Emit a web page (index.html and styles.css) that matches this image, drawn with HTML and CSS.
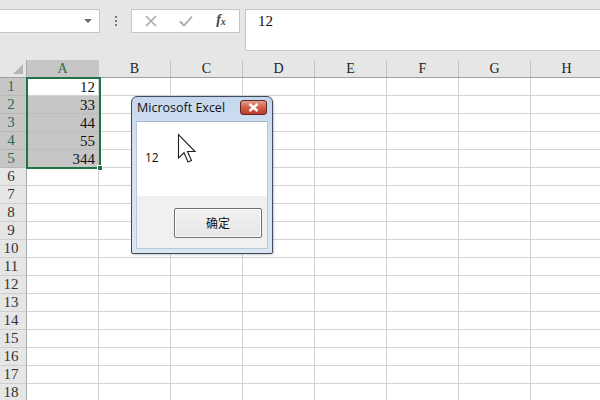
FILE: index.html
```html
<!DOCTYPE html>
<html>
<head>
<meta charset="utf-8">
<link rel="stylesheet" href="styles.css">
</head>
<body>
<div class="fbar">
  <div class="namebox"><span class="dd"></span></div>
  <div class="dots"><i></i><i></i><i></i></div>
  <div class="fxbox">
    <span class="ic ic-x"><svg width="12" height="12" viewBox="0 0 12 12"><path d="M1 1L11 11M11 1L1 11" stroke="#a8a8a8" stroke-width="1.6" fill="none"/></svg></span>
    <span class="ic ic-ok"><svg width="14" height="12" viewBox="0 0 14 12"><path d="M1 6.5L5 10.5L13 1.5" stroke="#a8a8a8" stroke-width="1.8" fill="none"/></svg></span>
    <span class="ic ic-fx"><span class="fx">f<sub>x</sub></span></span>
  </div>
  <div class="input">12</div>
</div>
<div class="sheet">
  <div class="row hdr">
    <div class="rh corner"><span class="tri"></span></div>
    <div class="hc sel">A</div><div class="hc">B</div><div class="hc">C</div><div class="hc">D</div><div class="hc">E</div><div class="hc">F</div><div class="hc">G</div><div class="hc">H</div>
  </div>
  <div class="row"><div class="rh sel">1</div><div class="c">12</div><div class="c"></div><div class="c"></div><div class="c"></div><div class="c"></div><div class="c"></div><div class="c"></div><div class="c"></div></div>
  <div class="row"><div class="rh sel">2</div><div class="c g">33</div><div class="c"></div><div class="c"></div><div class="c"></div><div class="c"></div><div class="c"></div><div class="c"></div><div class="c"></div></div>
  <div class="row"><div class="rh sel">3</div><div class="c g">44</div><div class="c"></div><div class="c"></div><div class="c"></div><div class="c"></div><div class="c"></div><div class="c"></div><div class="c"></div></div>
  <div class="row"><div class="rh sel">4</div><div class="c g">55</div><div class="c"></div><div class="c"></div><div class="c"></div><div class="c"></div><div class="c"></div><div class="c"></div><div class="c"></div></div>
  <div class="row"><div class="rh sel">5</div><div class="c g">344</div><div class="c"></div><div class="c"></div><div class="c"></div><div class="c"></div><div class="c"></div><div class="c"></div><div class="c"></div></div>
  <div class="row"><div class="rh">6</div><div class="c"></div><div class="c"></div><div class="c"></div><div class="c"></div><div class="c"></div><div class="c"></div><div class="c"></div><div class="c"></div></div>
  <div class="row"><div class="rh">7</div><div class="c"></div><div class="c"></div><div class="c"></div><div class="c"></div><div class="c"></div><div class="c"></div><div class="c"></div><div class="c"></div></div>
  <div class="row"><div class="rh">8</div><div class="c"></div><div class="c"></div><div class="c"></div><div class="c"></div><div class="c"></div><div class="c"></div><div class="c"></div><div class="c"></div></div>
  <div class="row"><div class="rh">9</div><div class="c"></div><div class="c"></div><div class="c"></div><div class="c"></div><div class="c"></div><div class="c"></div><div class="c"></div><div class="c"></div></div>
  <div class="row"><div class="rh">10</div><div class="c"></div><div class="c"></div><div class="c"></div><div class="c"></div><div class="c"></div><div class="c"></div><div class="c"></div><div class="c"></div></div>
  <div class="row"><div class="rh">11</div><div class="c"></div><div class="c"></div><div class="c"></div><div class="c"></div><div class="c"></div><div class="c"></div><div class="c"></div><div class="c"></div></div>
  <div class="row"><div class="rh">12</div><div class="c"></div><div class="c"></div><div class="c"></div><div class="c"></div><div class="c"></div><div class="c"></div><div class="c"></div><div class="c"></div></div>
  <div class="row"><div class="rh">13</div><div class="c"></div><div class="c"></div><div class="c"></div><div class="c"></div><div class="c"></div><div class="c"></div><div class="c"></div><div class="c"></div></div>
  <div class="row"><div class="rh">14</div><div class="c"></div><div class="c"></div><div class="c"></div><div class="c"></div><div class="c"></div><div class="c"></div><div class="c"></div><div class="c"></div></div>
  <div class="row"><div class="rh">15</div><div class="c"></div><div class="c"></div><div class="c"></div><div class="c"></div><div class="c"></div><div class="c"></div><div class="c"></div><div class="c"></div></div>
  <div class="row"><div class="rh">16</div><div class="c"></div><div class="c"></div><div class="c"></div><div class="c"></div><div class="c"></div><div class="c"></div><div class="c"></div><div class="c"></div></div>
  <div class="row"><div class="rh">17</div><div class="c"></div><div class="c"></div><div class="c"></div><div class="c"></div><div class="c"></div><div class="c"></div><div class="c"></div><div class="c"></div></div>
  <div class="row"><div class="rh">18</div><div class="c"></div><div class="c"></div><div class="c"></div><div class="c"></div><div class="c"></div><div class="c"></div><div class="c"></div><div class="c"></div></div>
  <div class="selbox"><span class="handle"></span></div>
</div>

<div class="dialog">
  <div class="title">
    <span class="ttext">Microsoft Excel</span>
    <span class="close"><svg width="11" height="9" viewBox="0 0 11 9"><path d="M1.5 1L9.5 8M9.5 1L1.5 8" stroke="#fff" stroke-width="2.4" fill="none"/></svg></span>
  </div>
  <div class="client">
    <div class="msg">12</div>
    <div class="foot"><div class="btn">确定</div></div>
  </div>
</div>

<svg class="cursor" width="24" height="32" viewBox="0 0 24 32">
  <path d="M1.5 1.5L1.5 25L7 19.8L11 29L14.5 27.5L10.5 18.5L18 18.5Z" fill="#fff" stroke="#222" stroke-width="1.1" stroke-linejoin="miter"/>
</svg>
</body>
</html>
```

FILE: styles.css
```css
* { box-sizing: border-box; }
html, body { margin: 0; padding: 0; }
body {
  width: 600px;
  height: 400px;
  overflow: hidden;
  background: #fff;
  font-family: "Liberation Serif", serif;
  position: relative;
}

.fbar {
  height: 60px;
  background: #e6e6e6;
  display: flex;
  align-items: flex-start;
  padding-top: 9px;
  width: 600px;
}
.namebox {
  width: 100px;
  flex: none;
  height: 24px;
  background: #fff;
  border: 1px solid #c6c6c6;
  border-left: 0;
  display: flex;
  justify-content: flex-end;
  align-items: center;
  padding-right: 7px;
}
.dd {
  width: 0; height: 0;
  border-left: 4px solid transparent;
  border-right: 4px solid transparent;
  border-top: 4px solid #6a6a6a;
}
.dots {
  width: 31px;
  flex: none;
  height: 24px;
  display: flex;
  flex-direction: column;
  align-items: center;
  justify-content: center;
  gap: 2px;
}
.dots i {
  display: block;
  width: 2px; height: 2px;
  background: #777;
}
.fxbox {
  width: 109px;
  flex: none;
  height: 24px;
  background: #fff;
  border: 1px solid #c6c6c6;
  display: flex;
  align-items: center;
}
.ic { display: flex; justify-content: center; align-items: center; height: 22px; }
.ic-x { width: 37px; }
.ic-ok { width: 34px; }
.ic-fx { width: 36px; }
.fx {
  font-family: "Liberation Serif", serif;
  font-style: italic;
  font-weight: bold;
  font-size: 14px;
  color: #444;
  line-height: 14px;
}
.fx sub { font-size: 10px; vertical-align: -1px; }
.input {
  margin-left: 5px;
  flex: 1;
  height: 42px;
  background: #fff;
  border: 1px solid #c6c6c6;
  border-right: 0;
  padding-left: 12px;
  font-size: 15px;
  line-height: 23px;
  color: #111;
}

.sheet { position: relative; width: 603px; }
.row { display: flex; height: 18px; }
.rh {
  width: 27px;
  flex: none;
  background: #e6e6e6;
  border-right: 1px solid #a9a9a9;
  border-bottom: 1px solid #cfcfcf;
  font-size: 15px;
  line-height: 17px;
  color: #333;
  text-align: center;
  padding-right: 4px;
}
.rh.sel { background: #c6c6c6; color: #2e6e4e; border-bottom-color: #b8b8b8; }
.hdr { border-bottom: 1px solid #a0a0a0; height: 18px; }
.hdr .rh, .hdr .hc { height: 17px; border-bottom: 0; }
.corner {
  display: flex;
  justify-content: flex-end;
  align-items: flex-end;
  padding: 0 3px 3px 0;
}
.tri {
  width: 0; height: 0;
  border-left: 10px solid transparent;
  border-bottom: 10px solid #b5b5b5;
}
.hc {
  width: 72px;
  flex: none;
  background: #e6e6e6;
  border-right: 1px solid #c6c6c6;
  text-align: center;
  font-size: 14px;
  line-height: 18px;
  color: #222;
}
.hc.sel { background: #c6c6c6; color: #2e6e4e; }
.c {
  width: 72px;
  flex: none;
  border-right: 1px solid #d4d4d4;
  border-bottom: 1px solid #d4d4d4;
  font-size: 15px;
  line-height: 18px;
  text-align: right;
  padding-right: 3px;
  color: #111;
}
.c.g { background: #c6c6c6; border-color: #bdbdbd; }
.selbox {
  position: absolute;
  left: 26px;
  top: 17px;
  width: 75px;
  height: 92px;
  border: 2px solid #217346;
}
.handle {
  position: absolute;
  right: -4px;
  bottom: -4px;
  width: 6px;
  height: 6px;
  background: #217346;
  border: 1px solid #fff;
}

.dialog {
  position: absolute;
  left: 131px;
  top: 96px;
  width: 142px;
  height: 158px;
  border: 1px solid #3e4c5e;
  border-radius: 6px 6px 2px 2px;
  background: linear-gradient(#c6d7ed, #d4e1f1 30%, #dbe6f3);
  padding: 0 4px 4px 4px;
  display: flex;
  flex-direction: column;
  box-shadow: 1px 1px 2px rgba(0,0,0,0.2);
}
.title {
  height: 24px;
  flex: none;
  display: flex;
  justify-content: space-between;
  align-items: flex-start;
  padding-left: 1px;
}
.ttext {
  font-family: "Open Sans", "Noto Sans", sans-serif;
  font-size: 12.5px;
  line-height: 22px;
  color: #111;
}
.close {
  margin-top: 3px;
  margin-right: 1px;
  width: 27px;
  height: 15px;
  border: 1px solid #5e2a22;
  border-radius: 3px;
  background: linear-gradient(#e59a8c, #d0604c 50%, #c0392b);
  display: flex;
  justify-content: center;
  align-items: center;
}
.client {
  flex: 1;
  background: #fff;
  border: 1px solid #b9c8da;
  border-top-color: #a3b5cb;
  display: flex;
  flex-direction: column;
}
.msg {
  height: 74px;
  padding: 29px 0 0 8px;
  font-family: "Open Sans", "Noto Sans", sans-serif;
  font-size: 12px;
  line-height: 14px;
  color: #111;
}
.foot {
  flex: 1;
  background: #f0f0f0;
  display: flex;
  justify-content: flex-end;
  align-items: flex-start;
  padding: 12px 5px 0 0;
}
.btn {
  width: 88px;
  height: 30px;
  border: 1px solid #707070;
  box-shadow: inset 0 0 0 1px #fcfcfc;
  border-radius: 2px;
  background: linear-gradient(#f2f2f2, #e6e6e6);
  font-family: "Noto Sans CJK SC", sans-serif;
  font-size: 12px;
  line-height: 28px;
  text-align: center;
  color: #111;
}
.cursor {
  position: absolute;
  left: 177px;
  top: 133px;
}
```
